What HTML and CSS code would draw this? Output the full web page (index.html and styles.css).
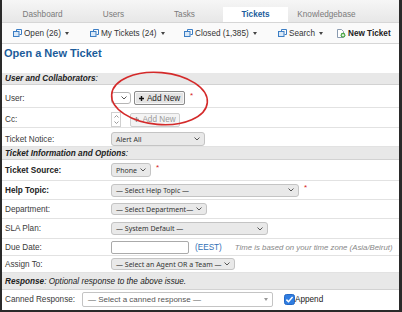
FILE: index.html
```html
<!DOCTYPE html>
<html lang="en">
<head>
    <meta charset="UTF-8">
    <meta name="viewport" content="width=device-width, initial-scale=1.0">
    <title>Open a New Ticket</title>
    <link rel="stylesheet" href="styles.css">
</head>
<body>
    <div class="frame">
        <nav class="tabs">
            <a class="tab">Dashboard</a>
            <a class="tab">Users</a>
            <a class="tab">Tasks</a>
            <a class="tab on">Tickets</a>
            <a class="tab">Knowledgebase</a>
        </nav>

        <div class="subnav">
            <span class="sn w-open">
                <svg class="ico" width="9" height="8" viewBox="0 0 9 8"><path d="M3.5 2V.5h5v5H6.5" fill="none" stroke="#3b7dc4"/><rect x=".5" y="2.5" width="5.5" height="5" fill="#dbe9f7" stroke="#3b7dc4"/></svg>
                Open (26)<i class="caret"></i>
            </span>
            <span class="sn w-mine">
                <svg class="ico" width="9" height="8" viewBox="0 0 9 8"><path d="M3.5 2V.5h5v5H6.5" fill="none" stroke="#3b7dc4"/><rect x=".5" y="2.5" width="5.5" height="5" fill="#dbe9f7" stroke="#3b7dc4"/></svg>
                My Tickets (24)<i class="caret"></i>
            </span>
            <span class="sn w-closed">
                <svg class="ico" width="9" height="8" viewBox="0 0 9 8"><path d="M3.5 2V.5h5v5H6.5" fill="none" stroke="#3b7dc4"/><rect x=".5" y="2.5" width="5.5" height="5" fill="#dbe9f7" stroke="#3b7dc4"/></svg>
                Closed (1,385)<i class="caret"></i>
            </span>
            <span class="sn w-search">
                <svg class="ico" width="9" height="8" viewBox="0 0 9 8"><path d="M3.5 2V.5h5v5H6.5" fill="none" stroke="#3b7dc4"/><rect x=".5" y="2.5" width="5.5" height="5" fill="#dbe9f7" stroke="#3b7dc4"/></svg>
                Search<i class="caret solid"></i>
            </span>
            <span class="sn new">
                <svg class="ico" width="10" height="9" viewBox="0 0 10 9"><path d="M1.5.5h4l2 2v6h-6z" fill="#fff" stroke="#8a9bb0"/><circle cx="7" cy="6.2" r="2.4" fill="#43a33c"/><path d="M7 4.9v2.6M5.7 6.2h2.6" stroke="#fff" stroke-width="1"/></svg>
                New Ticket
            </span>
        </div>

        <h1>Open a New Ticket</h1>

        <div class="form">
            <div class="sect h12"><b>User and Collaborators</b>:</div>

            <div class="row h23 pt4">
                <span class="lbl">User:</span>
                <span class="sel mini"><svg class="chev" width="6" height="4" viewBox="0 0 6 4"><path d="M.5.5 3 3 5.5.5" fill="none" stroke="#555"/></svg></span>
                <span class="btn">
                    <svg width="5" height="5" viewBox="0 0 5 5"><path d="M2.5 0v5M0 2.5h5" stroke="#111" stroke-width="1.4"/></svg>
                    Add New
                </span>
                <span class="req">*</span>
            </div>

            <div class="row h20 pt4">
                <span class="lbl">Cc:</span>
                <span class="lst">
                    <svg width="5" height="3" viewBox="0 0 5 3"><path d="M.5 2.5 2.5.5 4.5 2.5" fill="none" stroke="#999"/></svg>
                    <svg width="5" height="3" viewBox="0 0 5 3"><path d="M.5.5 2.5 2.5 4.5.5" fill="none" stroke="#999"/></svg>
                </span>
                <span class="btn off">
                    <svg width="5" height="5" viewBox="0 0 5 5"><path d="M2.5 0v5M0 2.5h5" stroke="#999" stroke-width="1.4"/></svg>
                    Add New
                </span>
            </div>

            <div class="row pt4">
                <span class="lbl">Ticket Notice:</span>
                <span class="sel w-notice">Alert All<svg class="chev" width="6" height="4" viewBox="0 0 6 4"><path d="M.5.5 3 3 5.5.5" fill="none" stroke="#555"/></svg></span>
            </div>

            <div class="sect h13"><b>Ticket Information and Options</b>:</div>

            <div class="row h21">
                <span class="lbl strong">Ticket Source:</span>
                <span class="sel w-phone">Phone<svg class="chev" width="6" height="4" viewBox="0 0 6 4"><path d="M.5.5 3 3 5.5.5" fill="none" stroke="#555"/></svg></span>
                <span class="req">*</span>
            </div>

            <div class="row">
                <span class="lbl strong">Help Topic:</span>
                <span class="sel w-help">— Select Help Topic —<svg class="chev" width="6" height="4" viewBox="0 0 6 4"><path d="M.5.5 3 3 5.5.5" fill="none" stroke="#555"/></svg></span>
                <span class="req">*</span>
            </div>

            <div class="row">
                <span class="lbl">Department:</span>
                <span class="sel w-dept">— Select Department—<svg class="chev" width="6" height="4" viewBox="0 0 6 4"><path d="M.5.5 3 3 5.5.5" fill="none" stroke="#555"/></svg></span>
            </div>

            <div class="row h20">
                <span class="lbl">SLA Plan:</span>
                <span class="sel w-sla">— System Default —<svg class="chev" width="6" height="4" viewBox="0 0 6 4"><path d="M.5.5 3 3 5.5.5" fill="none" stroke="#555"/></svg></span>
            </div>

            <div class="row h17">
                <span class="lbl">Due Date:</span>
                <span class="inp"></span>
                <span class="tz">(EEST)</span>
                <span class="hint">Time is based on your time zone (Asia/Beirut)</span>
            </div>

            <div class="row h17">
                <span class="lbl">Assign To:</span>
                <span class="sel w-agent">— Select an Agent OR a Team —<svg class="chev" width="6" height="4" viewBox="0 0 6 4"><path d="M.5.5 3 3 5.5.5" fill="none" stroke="#555"/></svg></span>
            </div>

            <div class="sect h17"><b>Response</b>: Optional response to the above issue.</div>

            <div class="row last">
                <span class="lbl wide">Canned Response:</span>
                <span class="canned">— Select a canned response —<i class="caret grey"></i></span>
                <span class="check"><svg width="11" height="11" viewBox="0 0 11 11"><rect x=".5" y=".5" width="10" height="10" rx="2" fill="#2f7de1" stroke="#2568c4"/><path d="M2.4 5.6 4.5 7.7 8.6 3.1" fill="none" stroke="#fff" stroke-width="1.5"/></svg>Append</span>
            </div>
        </div>

        <svg class="callout" width="400" height="312" viewBox="0 0 400 312">
            <ellipse cx="157.5" cy="98.5" rx="48" ry="26" transform="rotate(5 157.5 98.5)" fill="none" stroke="#d42a2a" stroke-width="1.6"/>
        </svg>
    </div>
</body>
</html>
```

FILE: styles.css
```css
body { margin: 0; font-family: "Liberation Sans", Arial, sans-serif; font-size: 8.2px; color: #333; background: #fff; }
.frame { position: relative; width: 402px; height: 312px; box-sizing: border-box; border-left: 2px solid #2a2a2a; border-right: 3px solid #2a2a2a; border-bottom: 2px solid #2a2a2a; overflow: hidden; }

/* top tabs */
.tabs { display: flex; gap: 6px; height: 22px; box-sizing: border-box; padding: 7px 0 0 8px; background: linear-gradient(#f6f6f6, #e7e7e7); }
.tab { width: 65px; height: 15px; line-height: 16px; text-align: center; color: #7a7a7a; }
.tab.on { background: #fff; color: #1c5d9c; font-weight: bold; }

/* sub navigation */
.subnav { display: flex; align-items: center; height: 22px; box-sizing: border-box; padding-left: 11px; background: #fafafa; border-top: 1px solid #d6d6d6; border-bottom: 1px solid #d6d6d6; }
.sn { display: flex; align-items: center; flex: none; color: #333; }
.sn .ico { margin-right: 2px; }
.w-open { width: 77px; }
.w-mine { width: 94px; }
.w-closed { width: 94px; }
.w-search { width: 58px; }
.sn.new { font-weight: bold; color: #222; }
.caret { display: inline-block; margin-left: 4px; border-top: 3px solid #444; border-left: 2px solid transparent; border-right: 2px solid transparent; }
.caret.solid { border-top-width: 3px; border-left-width: 2.5px; border-right-width: 2.5px; }
.caret.grey { border-top-color: #999; }

h1 { margin: 3px 0 13px 2px; font-size: 11px; line-height: 13px; color: #1b5c9a; }

/* form table */
.row { display: flex; align-items: center; height: 19px; box-sizing: border-box; border-bottom: 1px solid #e2e2e2; }
.row.last { border-bottom: none; }
.lbl { flex: none; width: 106px; padding-left: 3px; color: #3a3a3a; }
.lbl.strong { font-weight: bold; color: #222; }
.lbl.wide { width: 77px; }
.pt4 { padding-top: 4px; }
.h12 { height: 12px; }
.h13 { height: 13px; }
.h17 { height: 17px; }
.h20 { height: 20px; }
.h21 { height: 21px; }
.h23 { height: 23px; }
.sect { display: flex; align-items: center; box-sizing: border-box; padding-left: 3px; background: #e8e8e8; border-bottom: 1px solid #d2d2d2; font-style: italic; color: #222; }

/* controls */
.sel { display: flex; align-items: center; justify-content: space-between; flex: none; height: 13px; box-sizing: border-box; padding: 0 4px; border: 1px solid #c4c4c4; border-radius: 3px; background: #e9e9e9; font-family: "Noto Sans", sans-serif; font-size: 7px; color: #333; white-space: nowrap; }
.sel.mini { width: 20px; height: 12px; justify-content: flex-end; padding-right: 3px; background: #fff; border-color: #b5b5b5; }
.w-notice { width: 94px; height: 14px; }
.w-phone { width: 40px; height: 14px; }
.w-help { width: 188px; }
.w-dept { width: 96px; height: 12px; }
.w-sla { width: 157px; }
.w-agent { width: 124px; height: 12px; }

.btn { display: flex; align-items: center; justify-content: center; gap: 3px; flex: none; width: 51px; height: 14px; box-sizing: border-box; margin-left: 3px; border: 1px solid #8a8a8a; border-radius: 2px; background: #e4e4e4; box-shadow: inset 0 0 0 1px #f7f7f7; color: #222; }
.btn.off { width: 50px; margin-left: 9px; border-color: #cfcfcf; background: #f4f4f4; box-shadow: none; color: #9a9a9a; }
.lst { display: flex; flex-direction: column; justify-content: space-between; align-items: center; flex: none; width: 10px; height: 15px; box-sizing: border-box; padding: 2px 0; border: 1px solid #d0d0d0; background: #fff; }
.req { margin-left: 5px; margin-bottom: 6px; color: #d62222; font-size: 8px; }

.inp { flex: none; width: 78px; height: 13px; box-sizing: border-box; border: 1px solid #aaa; border-radius: 2px; background: #fff; }
.tz { margin-left: 6px; color: #3170b5; }
.hint { margin-left: 13px; color: #888; font-size: 7.8px; font-style: italic; white-space: nowrap; }

.canned { display: flex; align-items: center; justify-content: space-between; flex: none; width: 191px; height: 15px; box-sizing: border-box; padding: 0 4px 0 5px; border: 1px solid #c4c4c4; border-radius: 2px; background: #fff; font-size: 8px; color: #555; }
.check { display: flex; align-items: center; margin-left: 11px; color: #222; }

.callout { position: absolute; top: 0; left: 0; pointer-events: none; }
```
